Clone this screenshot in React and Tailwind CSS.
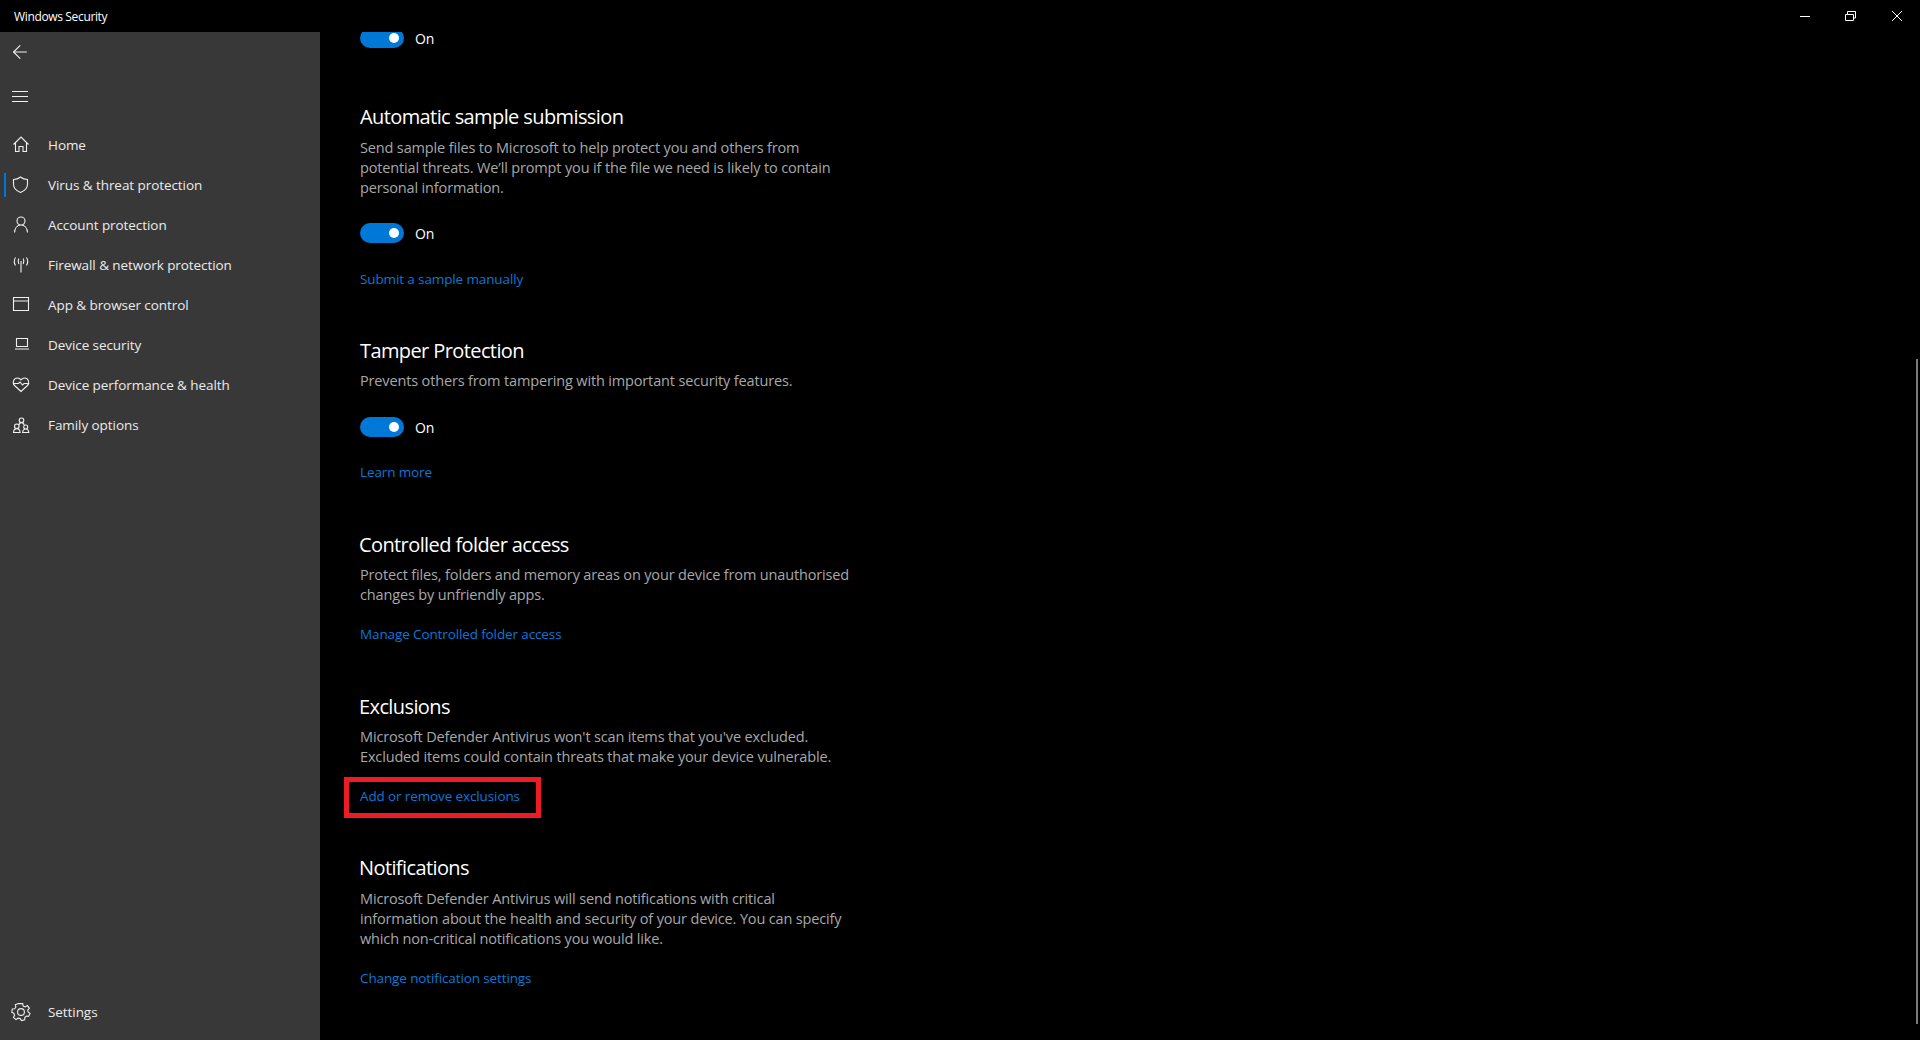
import { ArrowLeft } from 'lucide-react'

const navItems = [
  { label: 'Home', icon: 'home' },
  { label: 'Virus & threat protection', icon: 'shield', active: true },
  { label: 'Account protection', icon: 'user' },
  { label: 'Firewall & network protection', icon: 'antenna' },
  { label: 'App & browser control', icon: 'browser' },
  { label: 'Device security', icon: 'laptop' },
  { label: 'Device performance & health', icon: 'heart' },
  { label: 'Family options', icon: 'family' },
]

const iconPaths = {
  home: 'M3.5 10.5 11 3 18.5 10.5 M5.5 9V17.5H9V12.5H13V17.5H16.5V9',
  shield: 'M10.5 3C8.3 4.8 6 5.5 3.5 5.5V10C3.5 14 6.2 16.8 10.5 18.5C14.8 16.8 17.5 14 17.5 10V5.5C15 5.5 12.7 4.8 10.5 3Z',
  user: 'M11 3A4 4 0 1 0 11 11A4 4 0 1 0 11 3Z M4.5 18.5C4.7 14.5 7 11 11 11C15 11 17.3 14.5 17.5 18.5',
  antenna: 'M11 7V18.5 M8.8 4.5C7.8 6.5 7.8 8 8.8 10 M13.2 4.5C14.2 6.5 14.2 8 13.2 10 M5.5 3.5C4 6 4 9 5.5 11.5 M16.5 3.5C18 6 18 9 16.5 11.5',
  browser: 'M3.5 3.5H18.5V16.5H3.5Z M3.5 7H18.5',
  laptop: 'M6.5 4.5H17.5V12.5H6.5Z M5 15H19',
  heart: 'M11 17.5 4.5 11.5C2 9 3.5 4 7.5 4C9 4 10.2 4.8 11 5.8C11.8 4.8 13 4 14.5 4C18.5 4 20 9 17.5 11.5Z M3.5 9.5H8.5L10 8 12.5 11 14 9.5H18.5',
  family: 'M11.5 4A2.3 2.3 0 1 0 11.5 8.6A2.3 2.3 0 1 0 11.5 4Z M9 11C9.2 9.5 10.2 8.6 11.5 8.6C12.8 8.6 13.8 9.5 14 11 M6.8 10A2.3 2.3 0 1 0 6.8 14.6A2.3 2.3 0 1 0 6.8 10Z M3.5 18.5C3.7 16.2 5 14.6 6.8 14.6C8.6 14.6 9.9 16.2 10.1 18.5Z M15.7 11A2 2 0 1 0 15.7 15A2 2 0 1 0 15.7 11Z M12.6 18.5C12.8 16.5 14 15 15.7 15C17.4 15 18.6 16.5 18.8 18.5Z',
  menu: 'M3 5.5H19 M3 10.5H19 M3 15.5H19',
}

function NavIcon({ name }) {
  return (
    <svg viewBox="0 0 22 22" className="h-[22px] w-[22px] shrink-0" fill="none" stroke="#f0f0f0" strokeWidth="1.1">
      <path d={iconPaths[name]} />
    </svg>
  )
}

function SettingsIcon() {
  return (
    <svg viewBox="0 0 22 22" className="h-[22px] w-[22px] shrink-0" fill="none" stroke="#f0f0f0" strokeWidth="1.1">
      <circle cx="11" cy="11" r="3.4" />
      <path d="M9.3 2.6H12.7L13.2 5.1L15.3 6L17.4 4.6L19.4 7.3L17.7 9L18.1 11L20 12.4L18.6 15.4L16.3 15L14.8 16.5L14.7 18.9L11.5 19.6L10.1 17.6L8 17.2L6 18.6L3.5 16.4L4.6 14.2L3.8 12.2L1.8 11.4L2.3 8L4.7 7.7L5.9 6L5.3 3.8L8.3 2.6Z" />
    </svg>
  )
}

function Toggle() {
  return (
    <div className="flex h-5 items-end">
      <div className="flex h-5 w-[44px] items-center justify-end self-center rounded-full bg-[#0078d7] pr-[5px]">
        <div className="h-[10px] w-[10px] rounded-full bg-white" />
      </div>
      <span className="mb-[2px] ml-[11px] text-[14px] leading-[14px] tracking-[-0.15px] text-white">On</span>
    </div>
  )
}

function Heading({ children, className = '' }) {
  return <h2 className={`text-[20px] leading-7 font-normal tracking-[-0.6px] text-white ${className}`}>{children}</h2>
}

function Desc({ children, className = 'mt-[6px]' }) {
  return <p className={`w-[520px] text-[14.5px] leading-5 tracking-[-0.15px] text-[#a8a8a8] ${className}`}>{children}</p>
}

function LinkText({ children, className = '' }) {
  return <a className={`block text-[13.5px] leading-5 tracking-[-0.12px] text-[#0a78d8] ${className}`}>{children}</a>
}

export default function App() {
  return (
    <div className="flex h-[1040px] w-[1920px] flex-col overflow-hidden bg-black font-['Open_Sans',sans-serif]">
      <header className="relative z-10 flex h-8 shrink-0 items-center justify-between bg-black">
        <span className="pt-px pl-[14px] text-[12px] tracking-[-0.35px] text-white">Windows Security</span>
        <div className="flex h-8 items-center">
          <svg viewBox="0 0 46 32" className="h-8 w-[46px]" stroke="#fff" fill="none"><path d="M18 16.5H28" /></svg>
          <svg viewBox="0 0 46 32" className="h-8 w-[46px]" stroke="#fff" fill="none"><path d="M17.5 14.5H25.5V20.5H17.5Z M19.5 14V11.5H27.5V18H26" /></svg>
          <svg viewBox="0 0 46 32" className="h-8 w-[46px]" stroke="#fff" fill="none"><path d="M18 11 28 21 M28 11 18 21" /></svg>
        </div>
      </header>

      <div className="flex min-h-0 flex-1">
        <aside className="flex w-[320px] shrink-0 flex-col bg-[#383838]">
          <div className="flex h-10 items-center pl-[9px]">
            <ArrowLeft size={22} strokeWidth={1.2} color="#f0f0f0" />
          </div>
          <div className="mt-[5px] flex h-10 items-center pl-[9px]">
            <NavIcon name="menu" />
          </div>
          <nav className="mt-[8px]">
            {navItems.map((item) => (
              <div key={item.label} className="relative flex h-10 items-center pl-[10px]">
                {item.active && <span className="absolute top-2 left-1 h-6 w-[2px] bg-[#0078d7]" />}
                <NavIcon name={item.icon} />
                <span className="ml-[16px] text-[13.5px] tracking-[-0.07px] text-[#ebebeb]">{item.label}</span>
              </div>
            ))}
          </nav>
          <div className="mt-auto mb-[8px] flex h-10 items-center pl-[10px]">
            <SettingsIcon />
            <span className="ml-[16px] text-[13.5px] tracking-[-0.07px] text-[#ebebeb]">Settings</span>
          </div>
        </aside>

        <main className="relative min-w-0 flex-1 pl-10">
          <div className="-mt-1">
            <Toggle />
          </div>

          <Heading className="mt-[55px]">Automatic sample submission</Heading>
          <Desc className="mt-[7px]">
            Send sample files to Microsoft to help protect you and others from
            <br />
            potential threats. We’ll prompt you if the file we need is likely to contain
            <br />
            personal information.
          </Desc>
          <div className="mt-[25px]">
            <Toggle />
          </div>
          <LinkText className="mt-[26px]">Submit a sample manually</LinkText>

          <Heading className="mt-12">Tamper Protection</Heading>
          <Desc>Prevents others from tampering with important security features.</Desc>
          <div className="mt-[26px]">
            <Toggle />
          </div>
          <LinkText className="mt-[25px]">Learn more</LinkText>

          <Heading className="mt-[49px] -ml-px">Controlled folder access</Heading>
          <Desc>
            Protect files, folders and memory areas on your device from unauthorised
            <br />
            changes by unfriendly apps.
          </Desc>
          <LinkText className="mt-[19px]">Manage Controlled folder access</LinkText>

          <Heading className="mt-[49px] -ml-px">Exclusions</Heading>
          <Desc>
            Microsoft Defender Antivirus won't scan items that you've excluded.
            <br />
            Excluded items could contain threats that make your device vulnerable.
          </Desc>
          <div className="relative mt-[19px]">
            <LinkText>Add or remove exclusions</LinkText>
            <div className="absolute -top-[9px] -left-[16px] h-[41px] w-[197px] border-[5.5px] border-[#ed1c24]" />
          </div>

          <Heading className="mt-12 -ml-px">Notifications</Heading>
          <Desc className="mt-[7px]">
            Microsoft Defender Antivirus will send notifications with critical
            <br />
            information about the health and security of your device. You can specify
            <br />
            which non-critical notifications you would like.
          </Desc>
          <LinkText className="mt-[19px]">Change notification settings</LinkText>

          <div className="absolute top-[327px] right-[2px] h-[665px] w-[2px] bg-[#7a7a7a]" />
        </main>
      </div>
    </div>
  )
}
